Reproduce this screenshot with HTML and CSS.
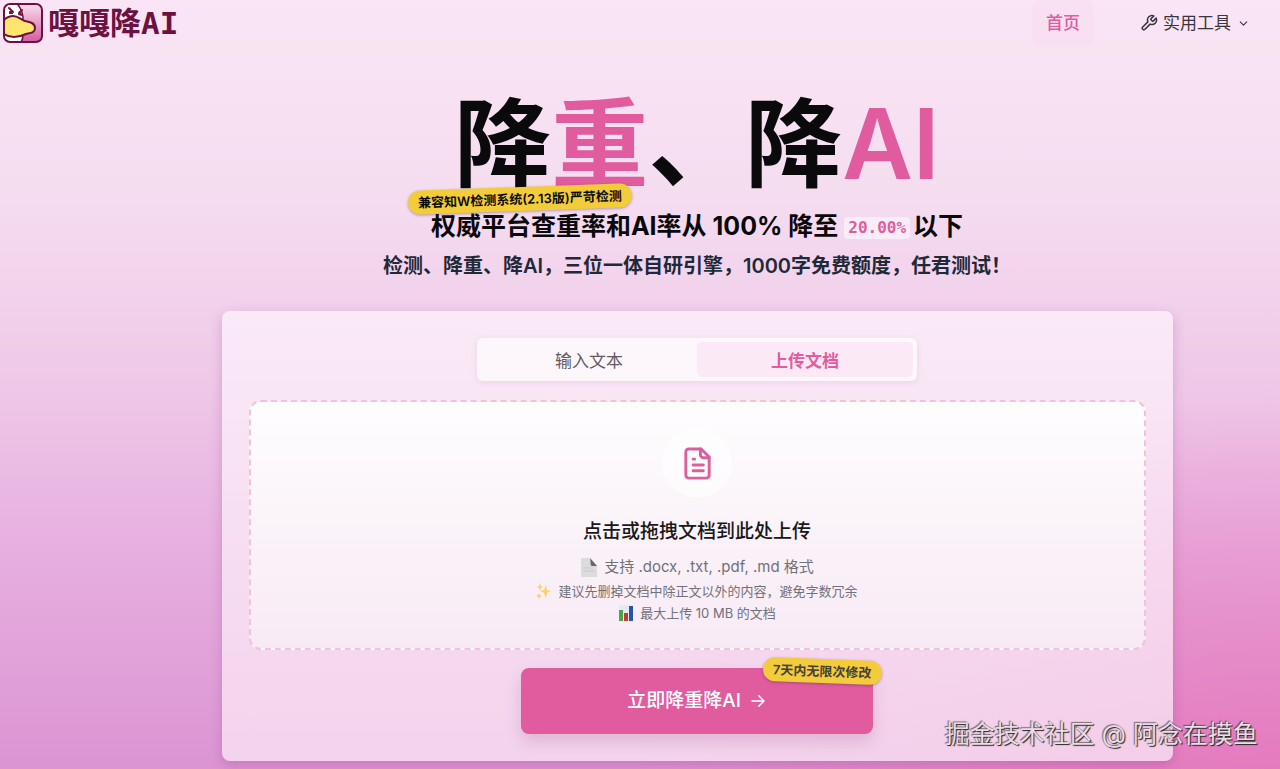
FILE: index.html
```html
<!doctype html>
<html lang="zh-cn">
	<head>
		<meta charset="UTF-8">
		<meta name="viewport" content="width=device-width, initial-scale=1">
		<title>嘎嘎降AI</title>
		<link rel="stylesheet" href="styles.css">
	</head>
	<body>
		<header class="header">
			<a href="#" class="logo">
				<svg class="logo-img" viewBox="0 0 40 40" aria-hidden="true">
					<defs>
						<linearGradient id="logoBg" x1="0" y1="0" x2="0" y2="1">
							<stop offset="0" stop-color="#fbe0f0"/>
							<stop offset="1" stop-color="#cf5a9c"/>
						</linearGradient>
						<clipPath id="logoClip"><rect x="1" y="1" width="38" height="38" rx="6"/></clipPath>
					</defs>
					<g clip-path="url(#logoClip)">
						<rect width="40" height="40" fill="url(#logoBg)"/>
						<path d="M0 0h13c4 3 6 8 7 14v18c0 3-1 6-3 9H0z" fill="#fff" stroke="#6d1240" stroke-width="1.5"/>
						<path d="M1 17c3-3 6-4 9-4 5 0 7 3 12 5 5 1 10 2 10 7s-5 5-9 6c-4 2-7 3-12 3-4 0-7-1-10-3z" fill="#fde56e" stroke="#6d1240" stroke-width="2"/>
						<path d="M6 5l4 4M16 10l3-3" stroke="#6d1240" stroke-width="2" stroke-linecap="round"/>
						<path d="M6 9c0-2 4-1 4 2H6zM15 12c0-2 3-3 4-1v2z" fill="#6d1240"/>
					</g>
					<rect x="1" y="1" width="38" height="38" rx="6" fill="none" stroke="#6d1240" stroke-width="2"/>
				</svg>
				<span>嘎嘎降AI</span>
			</a>
			<nav class="nav">
				<a href="#" class="nav-link active">首页</a>
				<button type="button" class="nav-link">
					<svg class="icon" width="18" height="18" viewBox="0 0 24 24" aria-hidden="true"><path d="M14.7 6.3a1 1 0 0 0 0 1.4l1.6 1.6a1 1 0 0 0 1.4 0l3.77-3.77a6 6 0 0 1-7.94 7.94l-6.91 6.91a2.12 2.12 0 0 1-3-3l6.91-6.91a6 6 0 0 1 7.94-7.94l-3.76 3.76z"/></svg>
					<span>实用工具</span>
					<svg class="icon arrow" width="13" height="13" viewBox="0 0 24 24" aria-hidden="true"><path d="m6 9 6 6 6-6"/></svg>
				</button>
			</nav>
		</header>
		<main class="main">
			<section class="hero">
				<h1>降<b>重</b>、降<b>AI</b></h1>
				<span class="tag hero-tag">兼容知W检测系统(2.13版)严苛检测</span>
				<h2>权威平台查重率和AI率从 100% 降至 <em>20.00%</em>以下</h2>
				<p>检测、降重、降AI，三位一体自研引擎，1000字免费额度，任君测试！</p>
			</section>
			<section class="card">
				<div class="tabs">
					<button type="button" class="tab">输入文本</button>
					<button type="button" class="tab active">上传文档</button>
				</div>
				<button type="button" class="upload">
					<span class="upload-icon">
						<svg class="icon" width="35" height="35" viewBox="0 0 24 24" aria-hidden="true"><path d="M14.500 2H6a2 2 0 0 0-2 2v16a2 2 0 0 0 2 2h12a2 2 0 0 0 2-2V7.500z"/><path d="M14 2v4a2 2 0 0 0 2 2h4M9 9h1M9 13h7M9 17h7"/></svg>
					</span>
					<span class="upload-title">点击或拖拽文档到此处上传</span>
					<span class="upload-type">
						<svg width="18" height="20" viewBox="0 0 18 20" aria-hidden="true"><path d="M1 1h9l7 8v11H1z" fill="#dcdcde"/><path d="M10 1l7 8h-5c-2 0-1-5-2-8z" fill="#66666a"/><path d="M3 11h8M3 14h11" stroke="#c8c8cc"/></svg>
						支持 .docx, .txt, .pdf, .md 格式
					</span>
					<span class="upload-tip">
						<svg width="16" height="16" viewBox="0 0 16 16" aria-hidden="true"><path d="M10 2l1 5 4 1-4 2-1 5-2-5-4-2 4-1zM4 0l1 3 2 1-2 1-1 3-1-3-2-1 2-1zM3 10l1 2 2 1-2 1-1 2-1-2-2-1 2-1z" fill="#fbd36b"/></svg>
						建议先删掉文档中除正文以外的内容，避免字数冗余
					</span>
					<span class="upload-tip">
						<svg width="16" height="16" viewBox="0 0 16 16" aria-hidden="true"><path d="M1 0h14v16H1z" fill="#e6eaf0"/><path d="M1 5h4v11H1z" fill="#4aa548"/><path d="M6 8h4v8H6z" fill="#c33a32"/><path d="M11 1h4v15h-4z" fill="#2456a6"/></svg>
						最大上传 10 MB 的文档
					</span>
				</button>
				<div class="submit">
					<button type="button" class="submit-btn">
						<span>立即降重降AI</span>
						<svg class="icon" width="18" height="18" viewBox="0 0 24 24" aria-hidden="true"><path d="M4 12h16M13 5l7 7-7 7"/></svg>
					</button>
					<span class="tag submit-tag">7天内无限次修改</span>
				</div>
			</section>
		</main>
		<div class="watermark">掘金技术社区 @ 阿念在摸鱼</div>
	</body>
</html>
```

FILE: styles.css
```css
* {
	margin: 0;
	padding: 0;
	box-sizing: border-box;
}
body {
	position: relative;
	min-height: 100vh;
	font-family: Inter, "Noto Sans CJK SC", sans-serif;
	color: #0a0a0c;
	background:
		radial-gradient(ellipse at 100% 105%, rgba(235, 105, 175, 0.65), rgba(235, 105, 175, 0) 36%),
		linear-gradient(180deg, #f9e5f5 0, #f5ddf0 25%, #efc8e8 50%, #e7b0e0 70%, #dc94d3 100%);
}
button {
	font-family: inherit;
	border: 0;
	background: none;
	cursor: pointer;
}
a {
	text-decoration: none;
}
.icon {
	fill: none;
	stroke: currentColor;
	stroke-width: 2;
	stroke-linecap: round;
	stroke-linejoin: round;
}

/* header */
.header {
	display: flex;
	justify-content: space-between;
	align-items: center;
	height: 46px;
	padding: 0 16px 0 3px;
}
.logo {
	display: flex;
	align-items: center;
	gap: 5px;
	color: #6d1240;
	font: bold 31px/40px "DejaVu Sans Mono", "Noto Sans CJK SC", monospace;
}
.logo-img {
	width: 40px;
	height: 40px;
}
.nav {
	display: flex;
	gap: 32px;
}
.nav-link {
	display: flex;
	align-items: center;
	gap: 5px;
	height: 46px;
	padding: 0 14px;
	border-radius: 8px;
	font-size: 17px;
	line-height: 24px;
	color: #3a3440;
}
.nav-link.active {
	color: #e05c9f;
	font-weight: 500;
	background: rgba(248, 222, 238, 0.6);
}
.nav-link .arrow {
	margin-left: 1px;
}

/* hero */
.main {
	padding: 36px 0 8px 114px;
}
.hero {
	position: relative;
	text-align: center;
}
.hero h1 {
	font-size: 97px;
	line-height: 124px;
	font-weight: 600;
}
.hero h1 b {
	color: #e05c9f;
	font-weight: 600;
}
.hero h2 {
	font-size: 25px;
	line-height: 40px;
	font-weight: 700;
}
.hero em {
	display: inline-block;
	margin-right: 3px;
	padding: 0 4px;
	border-radius: 4px;
	background: rgba(255, 255, 255, 0.5);
	color: #e05c9f;
	font: bold 16px/22px "DejaVu Sans Mono", monospace;
	vertical-align: 2px;
}
.hero p {
	font-size: 20px;
	line-height: 40px;
	font-weight: 600;
	color: #1f2937;
}
.tag {
	position: absolute;
	padding: 0 10px;
	border-radius: 12px;
	background: #f3cc3c;
	box-shadow: 0 1px 3px rgba(60, 30, 50, 0.35);
	font-size: 13px;
	line-height: 24px;
	font-weight: 600;
	white-space: nowrap;
}
.hero-tag {
	top: 105px;
	left: 50%;
	margin-left: -289px;
	transform: rotate(-2deg);
}

/* card */
.card {
	max-width: 951px;
	margin: 25px auto 0;
	padding: 27px;
	border-radius: 8px;
	background: linear-gradient(180deg, rgba(253, 242, 250, 0.75), rgba(250, 232, 246, 0.75));
	box-shadow: 0 4px 12px rgba(130, 40, 120, 0.25);
}
.tabs {
	display: flex;
	max-width: 440px;
	margin: 0 auto 19px;
	padding: 4px;
	border-radius: 6px;
	background: #fdf6fb;
	box-shadow: 0 2px 6px rgba(130, 60, 120, 0.1);
}
.tab {
	flex: 1;
	height: 35px;
	border-radius: 5px;
	font-size: 17px;
	color: #5f5a62;
}
.tab.active {
	color: #e05c9f;
	font-weight: 600;
	background: #fbeaf5;
}
.upload {
	display: flex;
	flex-direction: column;
	align-items: center;
	width: 100%;
	padding: 26px 20px 24px;
	border: 2px dashed #efc4d9;
	border-radius: 12px;
	background: linear-gradient(180deg, #fefdfe, #f8eaf5);
	color: #71717a;
}
.upload-icon {
	display: flex;
	align-items: center;
	justify-content: center;
	width: 70px;
	height: 70px;
	margin-bottom: 20px;
	border-radius: 50%;
	background: rgba(255, 255, 255, 0.5);
	color: #d9609c;
}
.upload-title {
	margin-bottom: 8px;
	font-size: 19px;
	line-height: 28px;
	font-weight: 500;
	color: #18181b;
}
.upload-type,
.upload-tip {
	display: flex;
	align-items: center;
	gap: 6px;
	font-size: 15px;
	line-height: 26px;
}
.upload-tip {
	font-size: 13px;
	line-height: 22px;
}
.submit {
	position: relative;
	max-width: 352px;
	margin: 18px auto 0;
}
.submit-btn {
	display: flex;
	align-items: center;
	justify-content: center;
	gap: 8px;
	width: 100%;
	height: 66px;
	border-radius: 8px;
	background: #e05c9f;
	box-shadow: 0 8px 16px rgba(150, 60, 120, 0.2);
	color: #fff;
	font-size: 19px;
	line-height: 28px;
	font-weight: 500;
}
.submit-tag {
	top: -9px;
	right: -8px;
	color: #45403a;
	transform: rotate(2deg);
}

.watermark {
	position: absolute;
	right: 22px;
	bottom: 17px;
	font-size: 25px;
	line-height: 36px;
	color: #e9dde6;
	text-shadow: 1px 1px 1px #222, -1px -1px 1px rgba(40, 40, 40, 0.6);
}
```
